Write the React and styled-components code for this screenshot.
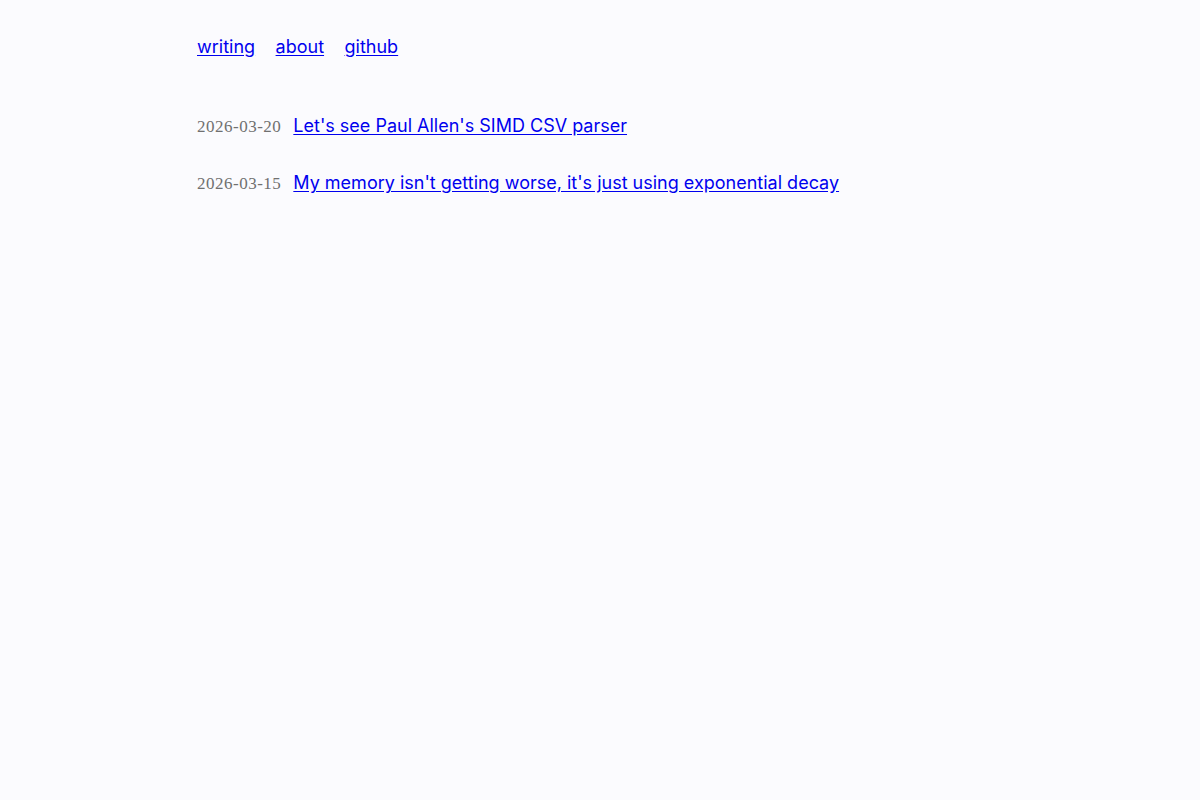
import React from 'react';
import styled, { createGlobalStyle } from 'styled-components';

const GlobalStyle = createGlobalStyle`
  html, body {
    margin: 0;
    background: #fbfbfe;
  }
  body {
    font-family: Inter, "Noto Sans", sans-serif;
  }
`;

const Page = styled.div`
  width: 806px;
  margin: 0 auto;
  padding-top: 34px;
`;

const Nav = styled.nav`
  display: flex;
  gap: 20.5px;
  font-size: 18px;
  line-height: 26px;
`;

const Link = styled.a`
  color: #0000ee;
  text-decoration: underline;
  text-underline-offset: 2px;
`;

const Posts = styled.ul`
  list-style: none;
  margin: 53px 0 0;
  padding: 0;
  display: flex;
  flex-direction: column;
  gap: 30px;
`;

const Post = styled.li`
  display: flex;
  align-items: baseline;
  gap: 12px;
  font-size: 18px;
  line-height: 26px;
`;

const PostDate = styled.time`
  font-family: "Liberation Serif", "DejaVu Serif", serif;
  font-size: 17px;
  letter-spacing: 0.5px;
  color: #707070;
`;

const posts = [
  { date: '2026-03-20', title: "Let's see Paul Allen's SIMD CSV parser" },
  { date: '2026-03-15', title: "My memory isn't getting worse, it's just using exponential decay" },
];

export default function App() {
  return (
    <>
      <GlobalStyle />
      <Page>
        <Nav>
          <Link href="#">writing</Link>
          <Link href="#">about</Link>
          <Link href="#">github</Link>
        </Nav>
        <Posts>
          {posts.map(p => (
            <Post key={p.date}>
              <PostDate>{p.date}</PostDate>
              <Link href="#">{p.title}</Link>
            </Post>
          ))}
        </Posts>
      </Page>
    </>
  );
}
